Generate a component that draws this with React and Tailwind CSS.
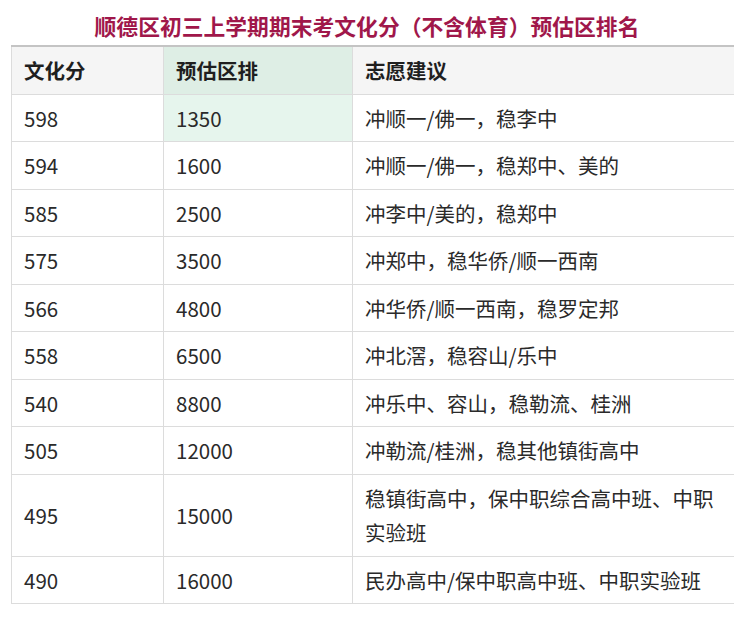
const rows = [
  ['598', '1350', '冲顺一/佛一，稳李中'],
  ['594', '1600', '冲顺一/佛一，稳郑中、美的'],
  ['585', '2500', '冲李中/美的，稳郑中'],
  ['575', '3500', '冲郑中，稳华侨/顺一西南'],
  ['566', '4800', '冲华侨/顺一西南，稳罗定邦'],
  ['558', '6500', '冲北滘，稳容山/乐中'],
  ['540', '8800', '冲乐中、容山，稳勒流、桂洲'],
  ['505', '12000', '冲勒流/桂洲，稳其他镇街高中'],
  ['495', '15000', '稳镇街高中，保中职综合高中班、中职实验班'],
  ['490', '16000', '民办高中/保中职高中班、中职实验班'],
]

export default function App() {
  return (
    <div className="w-[734px] min-h-[631px] bg-white pl-[11px] font-['Noto_Sans_CJK_SC','Noto_Sans',sans-serif] text-[#2a2a2a]">
      <h1 className="-ml-[11px] h-[45px] pt-[11px] text-center text-[21.8px] font-bold leading-[30px] text-[#a0174a]">
        顺德区初三上学期期末考文化分（不含体育）预估区排名
      </h1>

      <table className="w-[724px] border-collapse border-t-2 border-t-[#c4c4c4] text-[20.5px] leading-[34.5px]">
        <thead>
          <tr className="bg-[#f5f5f5]">
            <th className="w-[152px] border border-t-0 border-[#dcdcdc] px-3 py-1.5 text-left font-bold text-[#1f1f1f]">文化分</th>
            <th className="w-[189px] border border-t-0 border-[#dcdcdc] bg-[#deeee5] px-3 py-1.5 text-left font-bold text-[#1f1f1f]">预估区排</th>
            <th className="border border-t-0 border-r-0 border-[#dcdcdc] px-3 py-1.5 text-left font-bold text-[#1f1f1f]">志愿建议</th>
          </tr>
        </thead>
        <tbody>
          {rows.map((r, i) => (
            <tr key={r[0]}>
              <td className="border border-[#dcdcdc] px-3 py-1.5 align-middle">{r[0]}</td>
              <td className={`border border-[#dcdcdc] px-3 py-1.5 align-middle ${i === 0 ? 'bg-[#e6f5ed]' : ''}`}>{r[1]}</td>
              <td className="border border-r-0 border-[#dcdcdc] py-1.5 pl-3 pr-3 align-middle">{r[2]}</td>
            </tr>
          ))}
        </tbody>
      </table>
    </div>
  )
}
